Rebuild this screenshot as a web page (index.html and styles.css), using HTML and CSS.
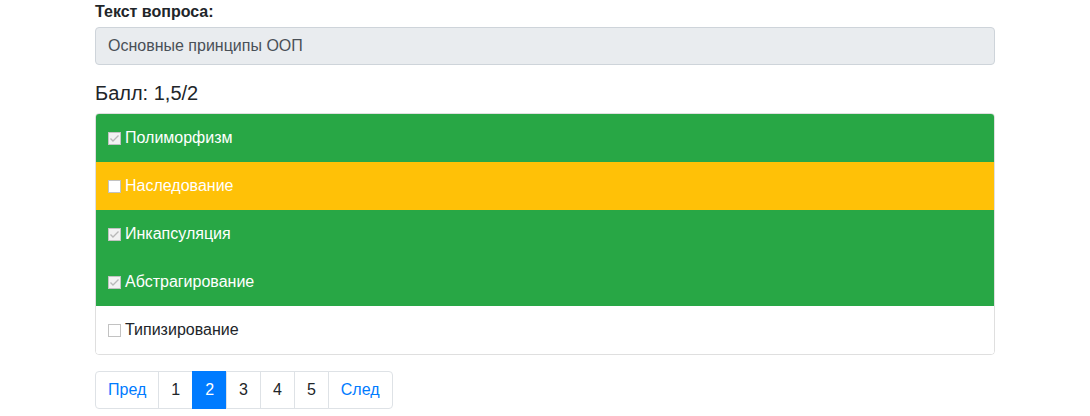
FILE: index.html
```html
<!DOCTYPE html>
<html lang="ru">
<head>
<meta charset="utf-8">
<title>Вопрос</title>
<link rel="stylesheet" href="styles.css">
</head>
<body>
<div class="container">
  <label class="q-label">Текст вопроса:</label>
  <div class="q-input">Основные принципы ООП</div>
  <h5 class="score">Балл: 1,5/2</h5>
  <ul class="answers">
    <li class="answer ok"><span class="cb checked"><svg viewBox="0 0 13 13" width="13" height="13"><path d="M2.5 6.5 L5 9 L10.5 3.5" fill="none" stroke="#b8b8b8" stroke-width="1.4"/></svg></span>Полиморфизм</li>
    <li class="answer warn"><span class="cb"></span>Наследование</li>
    <li class="answer ok"><span class="cb checked"><svg viewBox="0 0 13 13" width="13" height="13"><path d="M2.5 6.5 L5 9 L10.5 3.5" fill="none" stroke="#b8b8b8" stroke-width="1.4"/></svg></span>Инкапсуляция</li>
    <li class="answer ok"><span class="cb checked"><svg viewBox="0 0 13 13" width="13" height="13"><path d="M2.5 6.5 L5 9 L10.5 3.5" fill="none" stroke="#b8b8b8" stroke-width="1.4"/></svg></span>Абстрагирование</li>
    <li class="answer plain"><span class="cb"></span>Типизирование</li>
  </ul>
  <ul class="pagination">
    <li class="page link">Пред</li>
    <li class="page">1</li>
    <li class="page active">2</li>
    <li class="page">3</li>
    <li class="page">4</li>
    <li class="page">5</li>
    <li class="page link">След</li>
  </ul>
</div>
</body>
</html>
```

FILE: styles.css
```css
* { box-sizing: border-box; }
html, body { margin: 0; padding: 0; background: #fff; }
body {
  font-family: "Liberation Sans", Arial, sans-serif;
  font-size: 16px;
  line-height: 24px;
  color: #212529;
}
.container {
  width: 900px;
  margin: 0 auto;
}
.q-label {
  display: block;
  font-weight: bold;
  line-height: 24px;
  margin-bottom: 3px;
}
.q-input {
  height: 38px;
  padding: 6px 12px;
  line-height: 24px;
  background: #e9ecef;
  border: 1px solid #ced4da;
  border-radius: 4px;
  color: #495057;
}
.score {
  margin: 16px 0 8px;
  font-size: 20px;
  font-weight: normal;
  line-height: 24px;
}
.answers {
  list-style: none;
  margin: 0;
  padding: 0;
  border: 1px solid rgba(0,0,0,.125);
  border-radius: 4px;
  overflow: hidden;
}
.answer {
  display: flex;
  align-items: center;
  height: 48px;
  padding: 12px 12px;
  line-height: 24px;
}
.answer.ok { background: #28a745; color: #fff; }
.answer.warn { background: #ffc107; color: #fff; }
.answer.plain { background: #fff; color: #212529; }
.cb {
  width: 13px;
  height: 13px;
  margin: 1px 4px 0 0;
  border: 1px solid #c2c2c2;
  background: #fff;
  flex: none;
  position: relative;
}
.cb.checked { background: #f2f2f2; }
.cb svg { position: absolute; left: -1px; top: -1px; }
.pagination {
  list-style: none;
  display: flex;
  margin: 16px 0 0;
  padding: 0;
}
.page {
  padding: 8px 12px;
  line-height: 20px;
  border: 1px solid #dee2e6;
  margin-left: -1px;
  color: #212529;
  background: #fff;
}
.page:first-child { margin-left: 0; border-radius: 4px 0 0 4px; }
.page:last-child { border-radius: 0 4px 4px 0; }
.page.link { color: #007bff; }
.page.active { background: #007bff; border-color: #007bff; color: #fff; }
```
